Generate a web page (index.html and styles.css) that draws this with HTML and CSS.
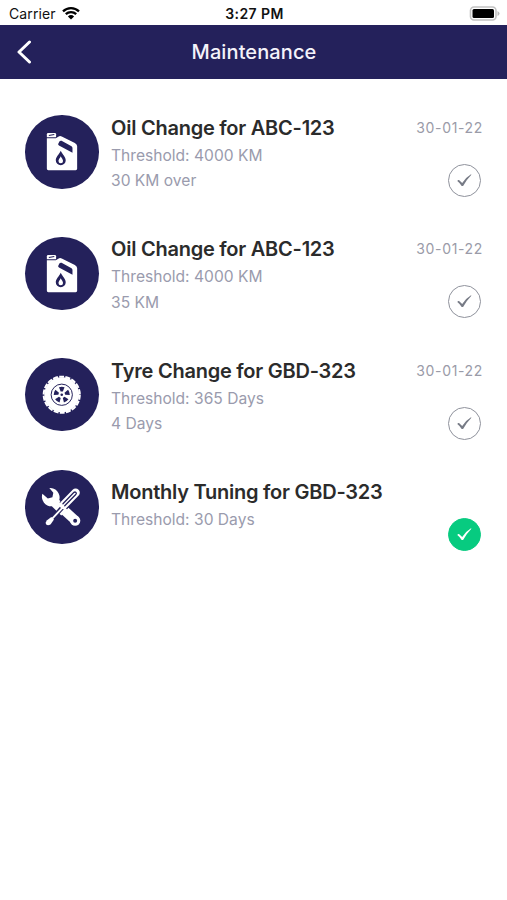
FILE: index.html
```html
<!DOCTYPE html>
<html lang="en">
  <head>
    <meta charset="UTF-8" />
    <meta name="viewport" content="width=device-width, initial-scale=1.0" />
    <title>Maintenance</title>
    <link rel="stylesheet" href="styles.css">
  </head>
  <body>
    <!-- Shared icons -->
    <svg class="sprite" aria-hidden="true">
      <symbol id="icon-oil" viewBox="0 0 74 74">
        <path fill="#fff" d="M22 19.300q0-1.300 1.300-1.300h6.700q1.300 0 1.300 1.300v3.200h-9.300z" />
        <path fill="#fff" d="M22 23.500h9l2.500-1.700q1.700-1 3.500-.2l13.200 6.500q2.300 1.200 2.300 3.400v22.500q0 1.500-1.500 1.500h-27.500q-1.500 0-1.500-1.500z" />
        <path stroke="#24215b" stroke-width="1.100" d="M24 20.700l5.500-1" />
        <path fill="#24215b" d="M34.800 26.500q.8-1 2-.5l10 5.500q1 .6 1 1.600v5l-13.600-7.300q-1.400-.8-.6-2z" />
        <path fill="#24215b" d="M36 36c2 4 5 6.500 5 9.600a5 5 0 0 1-10 0c0-3.100 3-5.600 5-9.600z" />
        <path fill="#fff" d="M36 41.500c1 2.200 2.300 3.200 2.300 4.800a2.300 2.300 0 0 1-4.600 0c0-1.600 1.300-2.600 2.300-4.800z" />
      </symbol>
      <symbol id="icon-tyre" viewBox="0 0 74 74">
        <circle cx="37" cy="37" r="17.600" fill="#fff" />
        <circle cx="37" cy="37" r="18.200" fill="none" stroke="#fff" stroke-width="2" stroke-dasharray="5 1.353" />
        <circle cx="37" cy="37" r="10.700" fill="none" stroke="#24215b" stroke-width="1" />
        <g fill="#24215b">
          <path id="slot" d="M34.200 29.400q2.800-1 5.600 0l-1.700 4.300h-2.200z" />
          <use href="#slot" transform="rotate(72 37 37)" />
          <use href="#slot" transform="rotate(144 37 37)" />
          <use href="#slot" transform="rotate(216 37 37)" />
          <use href="#slot" transform="rotate(288 37 37)" />
          <circle cx="37" cy="37" r="1.300" />
        </g>
      </symbol>
      <symbol id="icon-tools" viewBox="0 0 74 74">
        <!-- wrench -->
        <path fill="#fff" d="M24.500 18.200a9.500 9.500 0 0 1 10 12l9 8.600-7 7-9.500-9.300a9.500 9.500 0 0 1-9.500-12.500l5.500 4.700 4.600-1.200.9-4.600z" />
        <path stroke="#fff" stroke-width="9.500" d="M40 41L50.500 50.500" />
        <circle cx="50.500" cy="51" r="5.200" fill="#fff" />
        <circle cx="50.500" cy="51" r="2" fill="#24215b" />
        <!-- screwdriver -->
        <path stroke="#24215b" stroke-width="4.500" d="M40.500 34.500L31 45" />
        <path stroke="#fff" stroke-width="1.900" d="M41 34.500L27 49.500" />
        <path fill="#fff" d="M26.500 47.200l2.700 2.700-3.300 4.600q-2.300 1.900-4.300.7-1.600-2.200.3-4.300z" />
        <path stroke="#24215b" stroke-width="10.500" d="M50 24L38.500 36" />
        <path stroke="#fff" stroke-width="8.400" stroke-linecap="round" d="M51 22.800L39 35.200" />
        <path stroke="#24215b" stroke-width="1.300" stroke-linecap="round" fill="none" d="M38.200 34L49.300 22.500q1.600-1 2.400.9-.1.700-.6 1.200L40 36" />
      </symbol>
      <symbol id="icon-check" viewBox="0 0 31 31">
        <path d="M8.300 15.900q.7-1.200 1.700-.8l3.200 2.800q3.700-5.700 8.800-8.700l.4.500q-4.500 4.500-8.300 11.200h-1.400q-1.700-2.900-4.400-5z" />
      </symbol>
    </svg>

    <div class="status-bar">
      <div class="carrier">
        <span>Carrier</span>
        <svg class="wifi" viewBox="0 0 18 14">
          <path d="M1 5.300a11.600 11.600 0 0 1 16 0M3.800 8.200a7.500 7.500 0 0 1 10.400 0" />
          <path class="wifi-dot" d="M9 13.500L5.900 10.400a4.500 4.500 0 0 1 6.200 0z" />
        </svg>
      </div>
      <span class="time">3:27 PM</span>
      <svg class="battery" viewBox="0 0 31 15">
        <rect x="1.500" y="1" width="25.500" height="13" rx="3.500" fill="#fff" stroke="#c2c2c2" stroke-width="1.600" />
        <rect x="3.500" y="3" width="21.500" height="9" rx="1.500" />
        <path d="M28.500 5q2 1 2 2.500t-2 2.500z" fill="#bbb" />
      </svg>
    </div>

    <header class="header">
      <svg class="back" viewBox="0 0 16 24">
        <path d="M13.500 2L3 12L13.500 22" />
      </svg>
      <h1>Maintenance</h1>
    </header>

    <main class="task-list">
      <article class="task">
        <svg class="task-icon"><use href="#icon-oil" /></svg>
        <div class="task-text">
          <h2>Oil Change for ABC-123</h2>
          <p>Threshold: 4000 KM</p>
          <p>30 KM over</p>
        </div>
        <div class="task-side">
          <span class="date">30-01-22</span>
          <svg class="check"><use href="#icon-check" /></svg>
        </div>
      </article>

      <article class="task">
        <svg class="task-icon"><use href="#icon-oil" /></svg>
        <div class="task-text">
          <h2>Oil Change for ABC-123</h2>
          <p>Threshold: 4000 KM</p>
          <p>35 KM</p>
        </div>
        <div class="task-side">
          <span class="date">30-01-22</span>
          <svg class="check"><use href="#icon-check" /></svg>
        </div>
      </article>

      <article class="task">
        <svg class="task-icon"><use href="#icon-tyre" /></svg>
        <div class="task-text">
          <h2>Tyre Change for GBD-323</h2>
          <p>Threshold: 365 Days</p>
          <p>4 Days</p>
        </div>
        <div class="task-side">
          <span class="date">30-01-22</span>
          <svg class="check"><use href="#icon-check" /></svg>
        </div>
      </article>

      <article class="task">
        <svg class="task-icon"><use href="#icon-tools" /></svg>
        <div class="task-text">
          <h2>Monthly Tuning for GBD-323</h2>
          <p>Threshold: 30 Days</p>
        </div>
        <div class="task-side task-side-done">
          <svg class="check check-done"><use href="#icon-check" /></svg>
        </div>
      </article>
    </main>
  </body>
</html>
```

FILE: styles.css
```css
* {
  box-sizing: border-box;
}
body {
  margin: 0;
  min-height: 100vh;
  background-color: #fff;
  font-family: Inter, 'Liberation Sans', sans-serif;
}
h1,
h2,
p {
  margin: 0;
}
.sprite {
  display: none;
}
/* Status bar */
.status-bar {
  display: grid;
  grid-template-columns: 1fr auto 1fr;
  align-items: center;
  height: 25px;
  padding: 2px 7px 0 9px;
  color: #111;
  font-size: 14px;
}
.carrier {
  display: flex;
  align-items: center;
  gap: 6px;
  letter-spacing: 0.1px;
}
.wifi {
  width: 18px;
  height: 14px;
  margin-top: -2px;
  fill: none;
  stroke: #000;
  stroke-width: 2.3;
}
.wifi .wifi-dot {
  fill: #000;
  stroke: none;
}
.time {
  font-weight: 600;
  letter-spacing: 0.4px;
}
.battery {
  justify-self: end;
  width: 31px;
  height: 15px;
  margin-top: -1px;
}
/* Header */
.header {
  display: grid;
  grid-template-columns: 1fr auto 1fr;
  align-items: center;
  height: 54px;
  padding: 0 15px 0 16px;
  background-color: #24215b;
  color: #f4f3fa;
}
.header h1 {
  font-size: 20px;
  font-weight: 500;
  letter-spacing: 0.1px;
}
.back {
  width: 16px;
  height: 24px;
  fill: none;
  stroke: #fff;
  stroke-width: 3;
  stroke-linecap: round;
  stroke-linejoin: round;
}
/* Task rows */
.task-list {
  display: flex;
  flex-direction: column;
  gap: 30.3px;
  padding: 28px 24px 0 25px;
}
.task {
  display: flex;
  align-items: center;
  gap: 12.5px;
}
.task-icon {
  flex: none;
  width: 73.5px;
  height: 73.5px;
  margin-top: -1px;
  border-radius: 50%;
  background-color: #24215b;
}
.task-text {
  flex: 1;
  align-self: flex-start;
  padding-top: 8px;
}
.task-text h2 {
  margin-bottom: 1px;
  color: #2b2b2b;
  font-size: 20px;
  font-weight: 600;
  line-height: 27px;
  letter-spacing: -0.24px;
  white-space: nowrap;
}
.task-text p {
  color: #9a9bad;
  font-size: 15.6px;
  line-height: 25.3px;
}
.task-side {
  display: flex;
  flex-direction: column;
  align-items: flex-end;
  align-self: flex-start;
  gap: 26px;
  height: 91px;
  padding-top: 11px;
}
.date {
  color: #9a9ba8;
  font-size: 14px;
  line-height: 20px;
  letter-spacing: 0.65px;
}
.check {
  flex: none;
  width: 33px;
  height: 33px;
  margin-right: 2.5px;
  border: 1.5px solid #8f929c;
  border-radius: 50%;
  fill: #777b86;
}
.check-done {
  border-color: #07cb80;
  background-color: #07cb80;
  fill: #fff;
}
/* No date here, the badge hangs below the short row */
.task-side-done {
  height: 73px;
  padding-top: 47px;
}
```
